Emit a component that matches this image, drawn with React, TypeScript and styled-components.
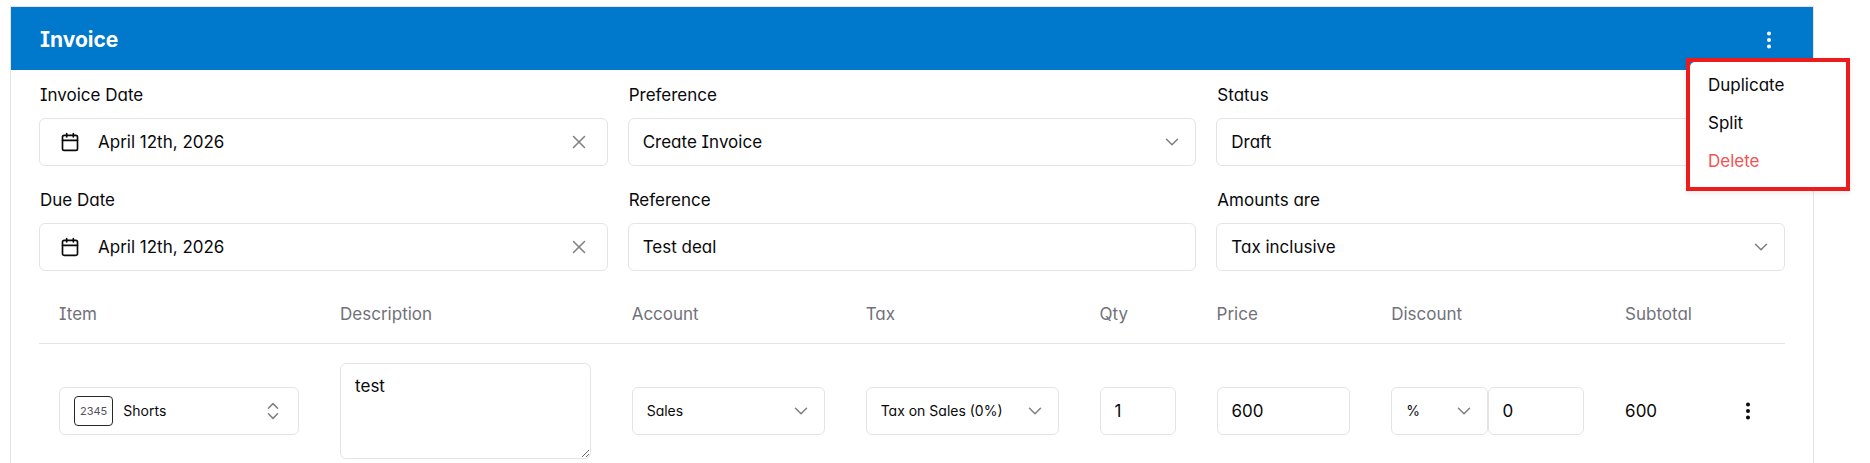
import React from "react";
import styled, { createGlobalStyle, css } from "styled-components";
import { Calendar, ChevronDown, ChevronsUpDown, EllipsisVertical, X } from "lucide-react";

const GlobalStyle = createGlobalStyle`
  *, *::before, *::after { box-sizing: border-box; }
  body {
    margin: 0;
    background: #fff;
    color: #09090b;
    font-family: Inter, "Liberation Sans", sans-serif;
    font-size: 17px;
    line-height: 24px;
    font-feature-settings: "cv08", "cv11";
  }
  button, input, select, textarea {
    font: inherit;
    font-feature-settings: inherit;
    color: inherit;
    margin: 0;
  }
`;

const Page = styled.main`
  padding: 6px 56px 0 10px;
`;

const Card = styled.section`
  border: 1px solid #e4e4e7;
`;

const CardHeader = styled.header`
  position: relative;
  display: flex;
  align-items: center;
  justify-content: space-between;
  height: 63px;
  padding: 2px 28px 0 29px;
  background: #0078cb;
  color: #fff;
`;

const Title = styled.h1`
  margin: 0;
  font-size: 21px;
  line-height: 28px;
  font-weight: 700;
`;

const IconButton = styled.button`
  display: flex;
  align-items: center;
  justify-content: center;
  width: 32px;
  height: 32px;
  padding: 0;
  border: 0;
  background: none;
  cursor: pointer;
`;

const MenuFrame = styled.div`
  position: absolute;
  z-index: 2;
  top: 51px;
  right: -37px;
  width: 164px;
  border: 4px solid #ee1b1d;
  box-shadow: 0 2px 6px rgba(0, 0, 0, 0.08);
`;

const Menu = styled.div`
  padding: 4px 0 7px;
  border-radius: 5px;
  background: #fff;
`;

const MenuItem = styled.button<{ $danger?: boolean }>`
  display: block;
  width: 100%;
  height: 38px;
  padding: 0 18px;
  border: 0;
  background: none;
  text-align: left;
  color: ${(p) => (p.$danger ? "#f15353" : "#09090b")};
  cursor: pointer;
`;

const CardBody = styled.div`
  padding: 13px 28px 0;
`;

const FieldGrid = styled.div`
  display: grid;
  grid-template-columns: repeat(3, 1fr);
  gap: 22px 20px;
`;

const Field = styled.div`
  display: flex;
  flex-direction: column;
  gap: 11px;
  min-width: 0;
`;

const FieldLabel = styled.label`
  display: block;
  padding-left: 1px;
`;

const controlBox = css`
  border: 1px solid #e4e4e7;
  border-radius: 6px;
  background: #fff;
  width: 100%;
  height: 48px;
`;

const TextInput = styled.input`
  ${controlBox}
  padding: 0 14px;
`;

const TextArea = styled.textarea`
  ${controlBox}
  display: block;
  height: 96px;
  padding: 10px 14px;
  resize: vertical;
`;

const DateBox = styled.div`
  ${controlBox}
  display: flex;
  align-items: center;
  padding-right: 12px;
`;

const DateButton = styled.button`
  display: flex;
  flex: 1;
  align-items: center;
  gap: 18px;
  height: 100%;
  padding: 0 20px;
  border: 0;
  background: none;
  text-align: left;
`;

const SelectBox = styled.div`
  display: grid;
  align-items: center;
  width: 100%;
  > * { grid-area: 1 / 1; }
  > svg {
    justify-self: end;
    margin-right: 13px;
    color: #808085;
    pointer-events: none;
  }
`;

const Select = styled.select<{ $compact?: boolean }>`
  ${controlBox}
  appearance: none;
  padding: 0 32px 0 14px;
  font-size: ${(p) => (p.$compact ? "14px" : "17px")};
`;

const Items = styled.table`
  width: 100%;
  margin-top: 14px;
  border-collapse: collapse;
  table-layout: fixed;
`;

const HeadCell = styled.th`
  height: 58px;
  padding: 0 20px;
  border-bottom: 1px solid #e4e4e7;
  color: #71717a;
  font-weight: 400;
  text-align: left;
`;

const Cell = styled.td`
  padding: 19px 21px 19px 20px;
  vertical-align: middle;
`;

const ItemButton = styled.button`
  ${controlBox}
  display: flex;
  align-items: center;
  gap: 10px;
  padding: 0 14px;
  font-size: 14px;
  text-align: left;
  > svg { margin-left: auto; color: #808085; }
`;

const Sku = styled.span`
  display: flex;
  align-items: center;
  height: 30px;
  padding: 0 5px;
  border: 1px solid #27272a;
  border-radius: 4px;
  color: #52525b;
  font-size: 11px;
`;

const Discount = styled.div`
  display: grid;
  grid-template-columns: 1fr 1fr;
`;

const RowEnd = styled.div`
  display: flex;
  align-items: center;
  justify-content: space-between;
`;

type Column = { name: string; width: string };

const columns: Column[] = [
  { name: "Item", width: "16.1%" },
  { name: "Description", width: "16.7%" },
  { name: "Account", width: "13.4%" },
  { name: "Tax", width: "13.4%" },
  { name: "Qty", width: "6.7%" },
  { name: "Price", width: "10%" },
  { name: "Discount", width: "13.4%" },
  { name: "Subtotal", width: "10.3%" },
];

function DateField({ id, label, value }: { id: string; label: string; value: string }) {
  return (
    <Field>
      <FieldLabel htmlFor={id}>{label}</FieldLabel>
      <DateBox>
        <DateButton id={id} type="button">
          <Calendar size={20} strokeWidth={2} />
          {value}
        </DateButton>
        <IconButton type="button" aria-label={`Clear ${label}`}>
          <X size={22} strokeWidth={1.7} color="#808085" />
        </IconButton>
      </DateBox>
    </Field>
  );
}

function Dropdown({ id, value, label, compact }: { id?: string; value: string; label?: string; compact?: boolean }) {
  return (
    <SelectBox>
      <Select id={id} aria-label={label} $compact={compact} defaultValue={value}>
        <option>{value}</option>
      </Select>
      <ChevronDown size={22} strokeWidth={1.7} />
    </SelectBox>
  );
}

function SelectField({ id, label, value }: { id: string; label: string; value: string }) {
  return (
    <Field>
      <FieldLabel htmlFor={id}>{label}</FieldLabel>
      <Dropdown id={id} value={value} />
    </Field>
  );
}

export default function App() {
  return (
    <Page>
      <GlobalStyle />
      <Card>
        <CardHeader>
          <Title>Invoice</Title>
          <IconButton type="button" aria-label="Invoice actions">
            <EllipsisVertical size={22} strokeWidth={2.4} />
          </IconButton>
          <MenuFrame>
            <Menu role="menu">
              <MenuItem role="menuitem">Duplicate</MenuItem>
              <MenuItem role="menuitem">Split</MenuItem>
              <MenuItem role="menuitem" $danger>Delete</MenuItem>
            </Menu>
          </MenuFrame>
        </CardHeader>
        <CardBody>
          <FieldGrid>
            <DateField id="invoice-date" label="Invoice Date" value="April 12th, 2026" />
            <SelectField id="preference" label="Preference" value="Create Invoice" />
            <SelectField id="status" label="Status" value="Draft" />
            <DateField id="due-date" label="Due Date" value="April 12th, 2026" />
            <Field>
              <FieldLabel htmlFor="reference">Reference</FieldLabel>
              <TextInput id="reference" defaultValue="Test deal" />
            </Field>
            <SelectField id="amounts" label="Amounts are" value="Tax inclusive" />
          </FieldGrid>
          <Items>
            <colgroup>
              {columns.map((c) => (
                <col key={c.name} style={{ width: c.width }} />
              ))}
            </colgroup>
            <thead>
              <tr>
                {columns.map((c) => (
                  <HeadCell key={c.name} scope="col">{c.name}</HeadCell>
                ))}
              </tr>
            </thead>
            <tbody>
              <tr>
                <Cell>
                  <ItemButton type="button">
                    <Sku>2345</Sku>
                    Shorts
                    <ChevronsUpDown size={22} strokeWidth={1.7} />
                  </ItemButton>
                </Cell>
                <Cell><TextArea aria-label="Description" defaultValue="test" /></Cell>
                <Cell><Dropdown label="Account" value="Sales" compact /></Cell>
                <Cell><Dropdown label="Tax" value="Tax on Sales (0%)" compact /></Cell>
                <Cell><TextInput aria-label="Quantity" defaultValue="1" /></Cell>
                <Cell><TextInput aria-label="Price" defaultValue="600" /></Cell>
                <Cell>
                  <Discount>
                    <Dropdown label="Discount type" value="%" compact />
                    <TextInput aria-label="Discount" defaultValue="0" />
                  </Discount>
                </Cell>
                <Cell>
                  <RowEnd>
                    600
                    <IconButton type="button" aria-label="Row actions">
                      <EllipsisVertical size={22} strokeWidth={2.4} />
                    </IconButton>
                  </RowEnd>
                </Cell>
              </tr>
            </tbody>
          </Items>
        </CardBody>
      </Card>
    </Page>
  );
}
